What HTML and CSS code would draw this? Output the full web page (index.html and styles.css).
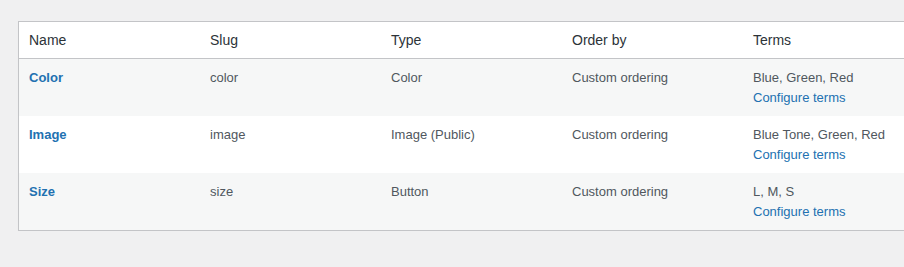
FILE: index.html
```html
<!DOCTYPE html>
<html lang="en">
<head>
    <meta charset="UTF-8">
    <meta name="viewport" content="width=device-width, initial-scale=1.0">
    <title>Attributes</title>
    <link rel="stylesheet" href="styles.css">
</head>
<body>

<div class="wrap">
    <table class="attributes-table">
        <thead>
            <tr>
                <th>Name</th>
                <th>Slug</th>
                <th>Type</th>
                <th>Order by</th>
                <th>Terms</th>
            </tr>
        </thead>
        <tbody>
            <tr class="alternate">
                <td><a class="row-title" href="#">Color</a></td>
                <td>color</td>
                <td>Color</td>
                <td>Custom ordering</td>
                <td>Blue, Green, Red<br><a class="configure" href="#">Configure terms</a></td>
            </tr>
            <tr>
                <td><a class="row-title" href="#">Image</a></td>
                <td>image</td>
                <td>Image (Public)</td>
                <td>Custom ordering</td>
                <td>Blue Tone, Green, Red<br><a class="configure" href="#">Configure terms</a></td>
            </tr>
            <tr class="alternate">
                <td><a class="row-title" href="#">Size</a></td>
                <td>size</td>
                <td>Button</td>
                <td>Custom ordering</td>
                <td>L, M, S<br><a class="configure" href="#">Configure terms</a></td>
            </tr>
        </tbody>
    </table>
</div>

</body>
</html>
```

FILE: styles.css
```css
html {
    overflow: hidden;
}
body {
    margin: 0;
    font-family: 'Liberation Sans', Arial, sans-serif;
    background: #f0f0f1;
    color: #50575e;
}
.wrap {
    padding: 21px 0 0 18px;
}
.attributes-table {
    table-layout: fixed;
    width: 907px;
    border-collapse: separate;
    border-spacing: 0;
    background: #fff;
    border: 1px solid #c3c4c7;
    box-shadow: 0 1px 1px rgba(0,0,0,0.04);
}
.attributes-table th {
    width: 161px;
    padding: 8px 10px;
    font-size: 14px;
    line-height: 20px;
    font-weight: 400;
    text-align: left;
    color: #2c3338;
    border-bottom: 1px solid #c3c4c7;
}
.attributes-table td {
    padding: 9px 10px;
    font-size: 13px;
    line-height: 19.5px;
    vertical-align: top;
}
.attributes-table tr.alternate td {
    background: #f6f7f7;
}
.attributes-table a {
    color: #2271b1;
    text-decoration: none;
}
.row-title {
    font-weight: 600;
}
```
